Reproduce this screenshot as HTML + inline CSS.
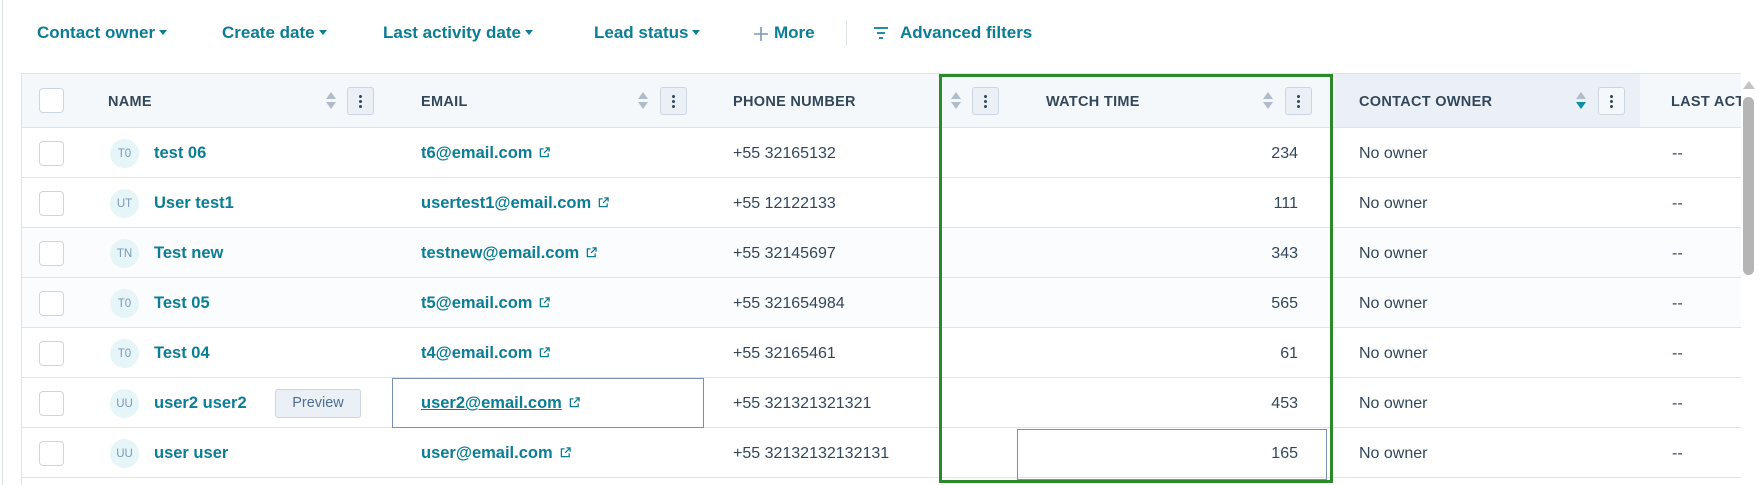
<!DOCTYPE html>
<html><head><meta charset="utf-8"><style>
*{box-sizing:border-box;margin:0;padding:0}
body{width:1759px;height:485px;overflow:hidden;background:#fff;font-family:"Liberation Sans",sans-serif;position:relative;color:#33475b}
.a{position:absolute}
.f{position:absolute;top:23px;font-size:17px;font-weight:bold;color:#0b7d94;white-space:nowrap}
.car{display:inline-block;width:0;height:0;border-left:4px solid transparent;border-right:4px solid transparent;border-top:5px solid #0b7d94;vertical-align:middle;margin-left:4px;margin-top:-3px}
.hdr{position:absolute;top:73px;left:21px;width:1720px;height:55px;background:#f5f8fa;border-top:1px solid #dfe3eb;border-bottom:1px solid #dfe3eb}
.ht{position:absolute;top:94px;font-size:14.5px;font-weight:bold;color:#33475b;letter-spacing:.3px;white-space:nowrap}
.menu{position:absolute;top:87px;width:27px;height:28px;border:1px solid #cbd6e2;border-radius:3px;background:#eaf0f6}
.menu i{position:absolute;left:11px;width:3px;height:3px;background:#33475b;border-radius:50%}
.sort{position:absolute;top:92px;width:10px;height:18px}
.sort:before{content:"";position:absolute;top:0;left:0;border-left:5px solid transparent;border-right:5px solid transparent;border-bottom:7px solid #b0bccb}
.sort:after{content:"";position:absolute;top:10px;left:0;border-left:5px solid transparent;border-right:5px solid transparent;border-top:7px solid #b0bccb}
.sort.d:after{border-top-color:#0b8fa3}
.row{position:absolute;left:21px;width:1720px;height:50px;border-bottom:1px solid #dfe3eb}
.cb{position:absolute;left:39px;width:25px;height:25px;border:1px solid #cbd6e2;border-radius:4px;background:#fff}
.av{position:absolute;left:110px;width:29px;height:29px;border-radius:50%;background:#e5f5f8;color:#7c98b6;font-size:11.5px;text-align:center;line-height:31px}
.t{position:absolute;font-size:16px;white-space:nowrap}
.nm{font-weight:bold;color:#0b7d94;font-size:16.5px}
.em{font-weight:bold;color:#0b7d94;font-size:16.5px}
.ext{display:inline-block;width:11px;height:11px;margin-left:7px;vertical-align:0}
.num{position:absolute;right:461px;font-size:16px;text-align:right}
</style></head><body>
<div class="a" style="left:2px;top:0;width:1px;height:485px;background:#dfe3eb"></div>
<div class="f" style="left:37px">Contact owner<span class="car"></span></div>
<div class="f" style="left:222px">Create date<span class="car"></span></div>
<div class="f" style="left:383px">Last activity date<span class="car"></span></div>
<div class="f" style="left:594px">Lead status<span class="car"></span></div>
<svg class="a" style="left:754px;top:27px" width="14" height="14" viewBox="0 0 14 14"><path d="M7 0v14M0 7h14" stroke="#7c98b6" stroke-width="1.6"/></svg>
<div class="f" style="left:774px">More</div>
<div class="a" style="left:846px;top:20px;width:1px;height:26px;background:#dfe3eb"></div>
<svg class="a" style="left:873px;top:26px" width="16" height="14" viewBox="0 0 16 14"><path d="M1 2h14M4 7h8M6 12h4" stroke="#0b7d94" stroke-width="1.8" fill="none"/></svg>
<div class="f" style="left:900px">Advanced filters</div>

<div class="hdr"></div>
<div class="a" style="left:1335px;top:74px;width:305px;height:53px;background:#eaf0f6"></div>
<div class="cb" style="top:88px"></div>
<div class="ht" style="left:108px">NAME</div>
<div class="sort" style="left:326px"></div><div class="menu" style="left:347px"><i style="top:7px"></i><i style="top:12px"></i><i style="top:17px"></i></div>
<div class="ht" style="left:421px">EMAIL</div>
<div class="sort" style="left:638px"></div><div class="menu" style="left:660px"><i style="top:7px"></i><i style="top:12px"></i><i style="top:17px"></i></div>
<div class="ht" style="left:733px">PHONE NUMBER</div>
<div class="sort" style="left:951px"></div><div class="menu" style="left:972px"><i style="top:7px"></i><i style="top:12px"></i><i style="top:17px"></i></div>
<div class="ht" style="left:1046px">WATCH TIME</div>
<div class="sort" style="left:1263px"></div><div class="menu" style="left:1285px"><i style="top:7px"></i><i style="top:12px"></i><i style="top:17px"></i></div>
<div class="ht" style="left:1359px">CONTACT OWNER</div>
<div class="sort d" style="left:1576px"></div><div class="menu" style="left:1598px;background:#f5f8fa"><i style="top:7px"></i><i style="top:12px"></i><i style="top:17px"></i></div>
<div class="ht" style="left:1671px">LAST ACT</div>

<div class="row" style="top:128px"></div>
<div class="row" style="top:178px"></div>
<div class="row" style="top:228px;background:#fbfcfd"></div>
<div class="row" style="top:278px;background:#fbfcfd"></div>
<div class="row" style="top:328px"></div>
<div class="row" style="top:378px"></div>
<div class="row" style="top:428px"></div>
<div class="a" style="left:21px;top:73px;width:1px;height:412px;background:#dfe3eb"></div>

<div class="cb" style="top:141px"></div><div class="av" style="top:139px">T0</div><div class="t nm" style="left:154px;top:144px">test 06</div>
<div class="cb" style="top:191px"></div><div class="av" style="top:189px">UT</div><div class="t nm" style="left:154px;top:194px">User test1</div>
<div class="cb" style="top:241px"></div><div class="av" style="top:239px">TN</div><div class="t nm" style="left:154px;top:244px">Test new</div>
<div class="cb" style="top:291px"></div><div class="av" style="top:289px">T0</div><div class="t nm" style="left:154px;top:294px">Test 05</div>
<div class="cb" style="top:341px"></div><div class="av" style="top:339px">T0</div><div class="t nm" style="left:154px;top:344px">Test 04</div>
<div class="cb" style="top:391px"></div><div class="av" style="top:389px">UU</div><div class="t nm" style="left:154px;top:394px">user2 user2</div>
<div class="a" style="left:275px;top:389px;width:86px;height:29px;border:1px solid #cbd6e2;border-radius:3px;background:#eaf0f6;color:#506e91;font-size:14.5px;text-align:center;line-height:27px">Preview</div>
<div class="cb" style="top:441px"></div><div class="av" style="top:439px">UU</div><div class="t nm" style="left:154px;top:444px">user user</div>

<svg width="0" height="0" style="position:absolute"><defs><symbol id="x" viewBox="0 0 12 12"><path d="M5 2H1.5v8.5H10V7M7 1h4v4M11 1L5.5 6.5" stroke="#0b7d94" stroke-width="1.4" fill="none"/></symbol></defs></svg>
<div class="t em" style="left:421px;top:144px">t6@email.com<svg class="ext"><use href="#x"/></svg></div>
<div class="t em" style="left:421px;top:194px">usertest1@email.com<svg class="ext"><use href="#x"/></svg></div>
<div class="t em" style="left:421px;top:244px">testnew@email.com<svg class="ext"><use href="#x"/></svg></div>
<div class="t em" style="left:421px;top:294px">t5@email.com<svg class="ext"><use href="#x"/></svg></div>
<div class="t em" style="left:421px;top:344px">t4@email.com<svg class="ext"><use href="#x"/></svg></div>
<div class="a" style="left:392px;top:378px;width:312px;height:50px;border:1.5px solid #7b8fb0"></div>
<div class="t em" style="left:421px;top:394px;text-decoration:underline">user2@email.com<svg class="ext"><use href="#x"/></svg></div>
<div class="t em" style="left:421px;top:444px">user@email.com<svg class="ext"><use href="#x"/></svg></div>

<div class="t" style="left:733px;top:145px">+55 32165132</div>
<div class="t" style="left:733px;top:195px">+55 12122133</div>
<div class="t" style="left:733px;top:245px">+55 32145697</div>
<div class="t" style="left:733px;top:295px">+55 321654984</div>
<div class="t" style="left:733px;top:345px">+55 32165461</div>
<div class="t" style="left:733px;top:395px">+55 321321321321</div>
<div class="t" style="left:733px;top:445px">+55 32132132132131</div>

<div class="a" style="left:1017px;top:429px;width:310px;height:51px;border:1.5px solid #7b8fb0"></div>
<div class="num" style="top:145px">234</div>
<div class="num" style="top:195px">111</div>
<div class="num" style="top:245px">343</div>
<div class="num" style="top:295px">565</div>
<div class="num" style="top:345px">61</div>
<div class="num" style="top:395px">453</div>
<div class="num" style="top:445px">165</div>

<div class="t" style="left:1359px;top:145px">No owner</div>
<div class="t" style="left:1359px;top:195px">No owner</div>
<div class="t" style="left:1359px;top:245px">No owner</div>
<div class="t" style="left:1359px;top:295px">No owner</div>
<div class="t" style="left:1359px;top:345px">No owner</div>
<div class="t" style="left:1359px;top:395px">No owner</div>
<div class="t" style="left:1359px;top:445px">No owner</div>
<div class="t" style="left:1672px;top:145px">--</div>
<div class="t" style="left:1672px;top:195px">--</div>
<div class="t" style="left:1672px;top:245px">--</div>
<div class="t" style="left:1672px;top:295px">--</div>
<div class="t" style="left:1672px;top:345px">--</div>
<div class="t" style="left:1672px;top:395px">--</div>
<div class="t" style="left:1672px;top:445px">--</div>

<div class="a" style="left:939px;top:74px;width:394px;height:409px;border:3px solid #2a8a2a"></div>

<div class="a" style="left:1741px;top:73px;width:18px;height:412px;background:#fff"></div>
<div class="a" style="left:1743px;top:81px;width:0;height:0;border-left:6px solid transparent;border-right:6px solid transparent;border-bottom:8px solid #c4c4c4"></div>
<div class="a" style="left:1743px;top:97px;width:11px;height:178px;border-radius:6px;background:#b5b5b5"></div>
</body></html>
